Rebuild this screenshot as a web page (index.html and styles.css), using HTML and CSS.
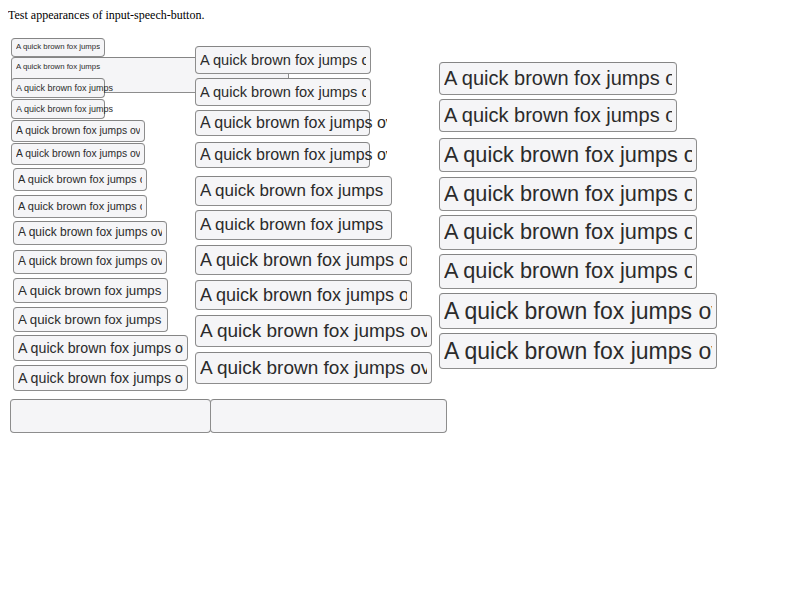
FILE: index.html
```html
<!DOCTYPE html>
<html>
<head>
<meta charset="utf-8">
<link rel="stylesheet" href="styles.css">
</head>
<body>
<p class="title">Test appearances of input-speech-button.</p>
<div class="cols">
  <div class="col col1">
    <div class="field w94 h19 fs8"><span class="txt">A quick brown fox jumps over the lazy dog</span></div>
    <div class="field big fs8"><span class="txt clip88">A quick brown fox jumps over the lazy dog</span></div>
    <div class="field over w94 h20 fs9"><span class="txt clip100">A quick brown fox jumps over the lazy dog</span></div>
    <div class="field over w94 h20 fs9"><span class="txt clip100">A quick brown fox jumps over the lazy dog</span></div>
    <div class="field w134 h22 fs10"><span class="txt">A quick brown fox jumps over the lazy dog</span></div>
    <div class="field w134 h22 fs10"><span class="txt">A quick brown fox jumps over the lazy dog</span></div>
    <div class="field indent w134 h23 fs11"><span class="txt">A quick brown fox jumps over the lazy dog</span></div>
    <div class="field indent w134 h23 fs11"><span class="txt">A quick brown fox jumps over the lazy dog</span></div>
    <div class="field indent w154 h24 fs12"><span class="txt">A quick brown fox jumps over the lazy dog</span></div>
    <div class="field indent w154 h24 fs12"><span class="txt">A quick brown fox jumps over the lazy dog</span></div>
    <div class="field indent w155 h25 fs13"><span class="txt">A quick brown fox jumps over the lazy dog</span></div>
    <div class="field indent w155 h25 fs13"><span class="txt">A quick brown fox jumps over the lazy dog</span></div>
    <div class="field indent w175 h26 fs14"><span class="txt">A quick brown fox jumps over the lazy dog</span></div>
    <div class="field indent w175 h26 fs14"><span class="txt">A quick brown fox jumps over the lazy dog</span></div>
  </div>
  <div class="col col2">
    <div class="field w176 h28 fs15"><span class="txt">A quick brown fox jumps over the lazy dog</span></div>
    <div class="field w176 h28 fs15"><span class="txt">A quick brown fox jumps over the lazy dog</span></div>
    <div class="field over w175 h26 fs16"><span class="txt clip187">A quick brown fox jumps over the lazy dog</span></div>
    <div class="field over w175 h26 fs16"><span class="txt clip187">A quick brown fox jumps over the lazy dog</span></div>
    <div class="field w197 h30 fs17"><span class="txt">A quick brown fox jumps over the lazy dog</span></div>
    <div class="field w197 h30 fs17"><span class="txt">A quick brown fox jumps over the lazy dog</span></div>
    <div class="field w217 h30 fs18"><span class="txt">A quick brown fox jumps over the lazy dog</span></div>
    <div class="field w217 h30 fs18"><span class="txt">A quick brown fox jumps over the lazy dog</span></div>
    <div class="field w237 h32 fs19"><span class="txt">A quick brown fox jumps over the lazy dog</span></div>
    <div class="field w237 h32 fs19"><span class="txt">A quick brown fox jumps over the lazy dog</span></div>
  </div>
  <div class="col col3">
    <div class="field w238 h33 fs20"><span class="txt">A quick brown fox jumps over the lazy dog</span></div>
    <div class="field w238 h33 fs20"><span class="txt">A quick brown fox jumps over the lazy dog</span></div>
    <div class="field w258 h34 fs21"><span class="txt">A quick brown fox jumps over the lazy dog</span></div>
    <div class="field w258 h34 fs21"><span class="txt">A quick brown fox jumps over the lazy dog</span></div>
    <div class="field w258 h35 fs22"><span class="txt">A quick brown fox jumps over the lazy dog</span></div>
    <div class="field w258 h35 fs22"><span class="txt">A quick brown fox jumps over the lazy dog</span></div>
    <div class="field w278 h36 fs23"><span class="txt">A quick brown fox jumps over the lazy dog</span></div>
    <div class="field w278 h36 fs23"><span class="txt">A quick brown fox jumps over the lazy dog</span></div>
  </div>
</div>
<div class="bottom">
  <div class="field empty1"></div>
  <div class="field empty2"></div>
</div>
</body>
</html>
```
FILE: styles.css
```css
html, body {
  background: #ffffff;
}
body {
  margin: 8px;
  font-family: "Liberation Serif", "Times New Roman", serif;
}
.title {
  margin: 0;
  font-size: 12px;
  line-height: 14px;
  color: #000;
}
.cols {
  display: flex;
  align-items: flex-start;
}
.col {
  display: flex;
  flex-direction: column;
  align-items: flex-start;
}
.col1 {
  width: 184px;
  margin-left: 3px;
  padding-top: 16px;
}
.col2 {
  width: 244px;
  padding-top: 24px;
}
.col3 {
  padding-top: 40px;
}

.field {
  box-sizing: border-box;
  display: flex;
  align-items: center;
  flex-shrink: 0;
  border: 1px solid #8d8d8d;
  border-top-color: #858585;
  border-radius: 4px;
  background: #f5f5f7;
  color: #2b2b2b;
  font-family: "Liberation Sans", Arial, sans-serif;
  padding: 0 4px 0 4px;
  overflow: hidden;
}
.field.over {
  overflow: visible;
}
.txt {
  display: block;
  flex: 1 1 auto;
  min-width: 0;
  white-space: nowrap;
  overflow: hidden;
  line-height: 1.15;
}
.over .txt {
  flex: 0 0 auto;
}
.clip88 { flex: 0 0 86px; }
.clip100 { width: 99px; }
.clip187 { width: 187px; }

.indent { margin-left: 2px; }

/* column 1 vertical rhythm */
.col1 .field:nth-child(2) { margin-top: 0; }
.col1 .field:nth-child(3) { margin-top: -15px; }
.col1 .field:nth-child(4) { margin-top: 1px; }
.col1 .field:nth-child(5) { margin-top: 1px; }
.col1 .field:nth-child(6) { margin-top: 1px; }
.col1 .field:nth-child(7) { margin-top: 3px; }
.col1 .field:nth-child(8) { margin-top: 4px; }
.col1 .field:nth-child(9) { margin-top: 3px; }
.col1 .field:nth-child(10) { margin-top: 5px; }
.col1 .field:nth-child(11) { margin-top: 4px; }
.col1 .field:nth-child(12) { margin-top: 4px; }
.col1 .field:nth-child(13) { margin-top: 3px; }
.col1 .field:nth-child(14) { margin-top: 4px; }

/* column 2 vertical rhythm */
.col2 .field:nth-child(2) { margin-top: 4px; }
.col2 .field:nth-child(3) { margin-top: 4px; }
.col2 .field:nth-child(4) { margin-top: 6px; }
.col2 .field:nth-child(5) { margin-top: 8px; }
.col2 .field:nth-child(6) { margin-top: 4px; }
.col2 .field:nth-child(n+7) { margin-top: 5px; }

/* column 3 vertical rhythm */
.col3 .field:nth-child(2) { margin-top: 4px; }
.col3 .field:nth-child(3) { margin-top: 6px; }
.col3 .field:nth-child(4) { margin-top: 5px; }
.col3 .field:nth-child(n+5) { margin-top: 4px; }

.big {
  width: 278px;
  height: 36px;
  align-items: flex-start;
  padding-top: 5px;
}

.w94 { width: 94px; }
.w134 { width: 134px; }
.w154 { width: 154px; }
.w155 { width: 155px; }
.w175 { width: 175px; }
.w176 { width: 176px; }
.w197 { width: 197px; }
.w217 { width: 217px; }
.w237 { width: 237px; }
.w238 { width: 238px; }
.w258 { width: 258px; }
.w278 { width: 278px; }

.h19 { height: 19px; }
.h20 { height: 20px; }
.h22 { height: 22px; }
.h23 { height: 23px; }
.h24 { height: 24px; }
.h25 { height: 25px; }
.h26 { height: 26px; }
.h28 { height: 28px; }
.h30 { height: 30px; }
.h32 { height: 32px; }
.h33 { height: 33px; }
.h34 { height: 34px; }
.h35 { height: 35px; }
.h36 { height: 36px; }

.fs8 { font-size: 7.8px; }
.fs9 { font-size: 9px; }
.fs10 { font-size: 10.3px; }
.fs11 { font-size: 11px; }
.fs12 { font-size: 12px; }
.fs13 { font-size: 13.3px; }
.fs14 { font-size: 14.2px; }
.fs15 { font-size: 14.6px; }
.fs16 { font-size: 16px; }
.fs17 { font-size: 17px; }
.fs18 { font-size: 18px; }
.fs19 { font-size: 19px; }
.fs20 { font-size: 20px; }
.fs21 { font-size: 21.7px; }
.fs22 { font-size: 21.7px; }
.fs23 { font-size: 23px; }

.bottom {
  display: flex;
  margin-top: 8px;
  margin-left: 2px;
}
.empty1 {
  width: 201px;
  height: 34px;
}
.empty2 {
  width: 237px;
  height: 34px;
  margin-left: -1px;
}
```
